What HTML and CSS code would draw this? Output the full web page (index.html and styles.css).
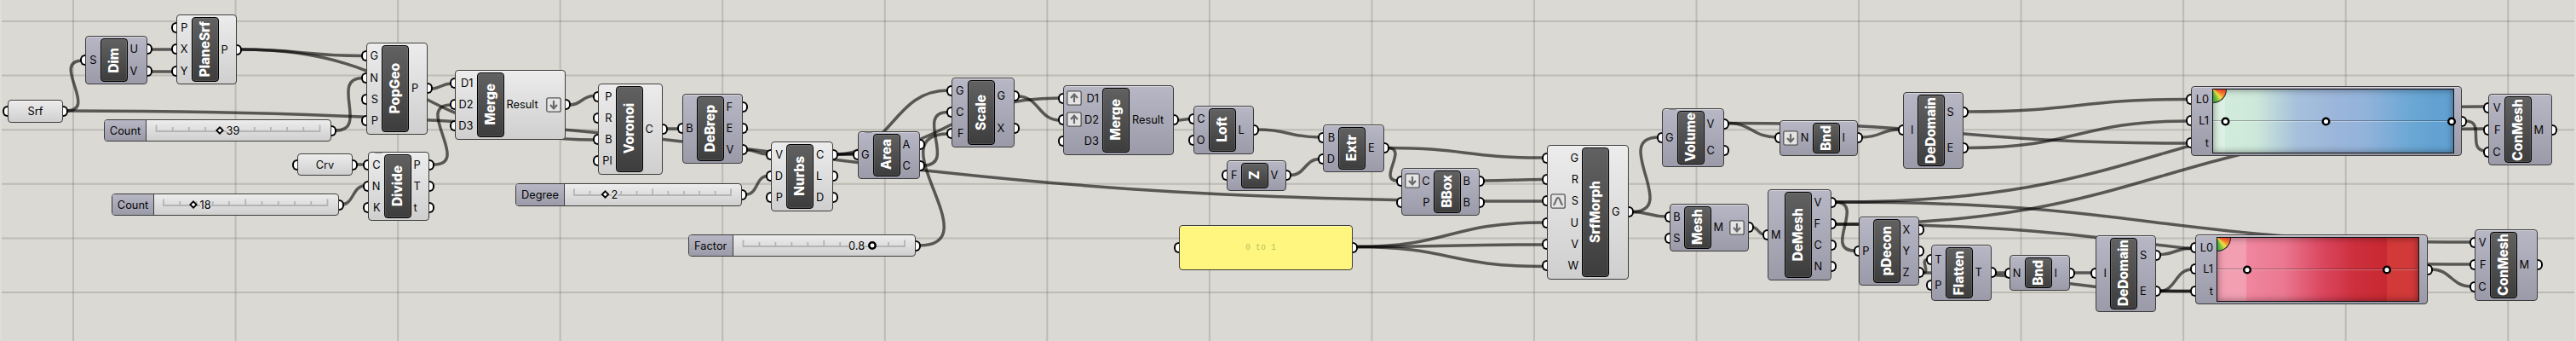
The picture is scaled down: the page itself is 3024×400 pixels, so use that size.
FILE: index.html
```html
<!DOCTYPE html>
<html lang="en">
<head>
<meta charset="utf-8">
<title>Surface morph definition</title>
<link rel="stylesheet" href="styles.css">
</head>
<body>
<main class="canvas">
<svg class="wires" id="wires" width="3024" height="400" viewBox="0 0 3024 400"></svg>
<div id="nodes"></div>
</main>
<script src="graph.js"></script>
</body>
</html>
```

FILE: styles.css
```css
* { box-sizing: border-box; }
body { margin: 0; background: #dfded9; font-family: Inter, "Liberation Sans", sans-serif; }
.canvas { position: relative; width: 3024px; height: 400px; overflow: hidden; }
.wires { position: absolute; left: 0; top: 0; }
.wires .paper { fill: #dbd9d3; }
.wires .grid { stroke: rgba(90, 90, 85, 0.24); stroke-width: 2; }
.wires .wire { fill: none; stroke: rgba(0, 0, 0, 0.6); stroke-width: 3.5; }

.node {
  position: absolute; display: flex; color: #050505; font-size: 12.8px; line-height: 16px;
  border: 1.5px solid #3c3c3c; border-radius: 4px;
  background: linear-gradient(#ececec, #cfcfcf);
  box-shadow: inset 0 1px 0 rgba(255, 255, 255, 0.45);
}
.node.dark { background: linear-gradient(#b8b7c5, #9b9aa8); }
.ports { display: flex; flex-direction: column; padding: 2px 0; }
.ports.out { flex: 1; }
.row { flex: 1; display: flex; align-items: center; position: relative; }
.in .row { justify-content: flex-end; padding-right: 4px; }
.out .row { padding-left: 3px; }
.in .icon { margin-right: auto; margin-left: 3px; }
.out .icon { margin-left: auto; margin-right: 4px; }
.label { position: relative; top: 0.5px; }
.icon { width: 18px; height: 18px; flex: none; display: block; }

.grip { position: absolute; top: 50%; width: 6px; height: 13px; margin-top: -6.5px; border: 2.4px solid #000; background: #fff; }
.grip.left { left: -7px; border-right: 0; border-radius: 6.5px 0 0 6.5px; }
.grip.right { right: -7px; border-left: 0; border-radius: 0 6.5px 6.5px 0; }

.tag {
  width: 32px; margin: 2px 0; border: 1.3px solid #000; border-radius: 4px; flex: none;
  background: linear-gradient(#616161, #3d3d3d); box-shadow: inset 0 0 0 1px rgba(255, 255, 255, 0.1);
  display: flex; align-items: center; justify-content: center; overflow: hidden;
}
.tag span { writing-mode: vertical-rl; transform: rotate(180deg); color: #fff; font-weight: 800; font-size: 15.3px; line-height: 20px; white-space: nowrap; }
.notch { position: absolute; top: -1px; width: 9px; height: 2px; background: #666; border-radius: 1px; opacity: 0.7; }

.param { justify-content: center; align-items: center; }
.caption { display: flex; align-items: center; justify-content: center; background: linear-gradient(#b8b7c5, #9b9aa8); border-right: 1.5px solid #3c3c3c; border-radius: 3px 0 0 3px; }
.track { flex: 1; position: relative; }
.track svg { display: block; width: 100%; height: 100%; overflow: visible; }
.value { position: absolute; top: 4.5px; background: linear-gradient(#e6e6e6, #d6d6d6); }
.panel { background: #fff67f; align-items: center; }
.panel .text { width: 100%; padding: 1px 0 0 77px; font: 10px/14px "Liberation Mono", monospace; color: #b9bf62; }

.swatch { border: 1.5px solid #111; margin: 2px 0; position: relative; flex: none; box-shadow: inset 0 0 9px rgba(0, 0, 0, 0.45); }
.swatch.cool { background: linear-gradient(90deg, #dcf0e3 0, #dcf0e3 5%, #d2ecdb 5%, #cde7da 18%, #a6c0dc 35%, #9cb6da 50%, #93b3db 63%, #6fa9d5 80%, #62a1d2 92%); }
.swatch.warm { background: linear-gradient(90deg, #f29fb2 0, #f29fb2 14.5%, #f0869f 14.5%, #ea7890 33%, #db4760 52%, #cd303d 68%, #c82831 84.5%, #d23939 84.5%); }
.swatch svg { display: block; width: 100%; height: 100%; overflow: visible; }
.wheel { position: absolute; left: 0; top: 0; width: 16px; height: 16px; border-radius: 0 0 16px 0; border: solid #222; border-width: 0 1.5px 1.5px 0;
  background: conic-gradient(from 90deg at 0 0, #e43d2d 0deg, #f08a2c 28deg, #f1e04b 48deg, #8fc63f 65deg, #2f9e41 90deg); }
```

FILE: graph.js
```js
// Node: [title, x, y, w, h, tagX, inputs, outputs, light?, notch?]
// A port prefixed with v, ^ or ~ carries a flatten, graft or reparameterize icon.
const components = [
  ["Dim",100,42,73,57,118,["S"],["U","V"]],
  ["PlaneSrf",207,17,71,82,225,["P","X","Y"],["P"],1],
  ["PopGeo",429.5,50,72,107.5,448.5,["G","N","S","P"],["P"],1],
  ["Merge",534,82,130,81.5,560,["D1","D2","D3"],["v:Result"],1],
  ["Divide",432,177.5,72,81.5,451,["C","N","K"],["P","T","t"],1,1],
  ["Voronoi",701.5,97.5,76,107,723,["P","R","B","Pl"],["C"],1],
  ["DeBrep",800.5,110,71,81.5,818,["B"],["F","E","V"]],
  ["Nurbs",905,166,73,81.5,923.5,["V","D","P"],["C","L","D"],1],
  ["Area",1006.5,153.5,73,56,1025,["G"],["A","C"],0,1],
  ["Scale",1117,91,73.5,81.5,1136,["G","C","F"],["G","X"]],
  ["Merge",1248,99.5,130,82,1294.5,["^:D1","^:D2","D3"],["Result"]],
  ["Loft",1400.5,124,71.5,56.5,1419,["C","O"],["L"]],
  ["Z",1439.5,187.5,70.5,36,1457,["F"],["V"]],
  ["Extr",1553,145.5,71.5,56,1571.5,["B","D"],["E"]],
  ["BBox",1644.5,196.5,92,56,1683,["v:C","P"],["B","B"]],
  ["SrfMorph",1816,169.5,96,158,1857.5,["G","R","~:S","U","V","W"],["G"],1],
  ["Volume",1950.5,126.5,73,69,1969,["G"],["V","C"],0,1],
  ["Bnd",2089,140.5,92,42,2128,["v:N"],["I"]],
  ["DeDomain",2234,107.5,70.5,90.5,2251,["I"],["S","E"]],
  ["Mesh",1959.5,238.5,93,56,1977,["B","S"],["v:M"]],
  ["DeMesh",2075,221.5,74.5,107,2095,["M"],["V","F","C","N"]],
  ["pDecon",2181.5,253.5,71,81.5,2199,["P"],["X","Y","Z"]],
  ["Flatten",2267,286.5,70.5,66.5,2284,["T","P"],["T"]],
  ["Bnd",2358.5,299,71.5,42,2377,["N"],["I"]],
  ["DeDomain",2460,275.5,70.5,90,2477.5,["I"],["S","E"]],
  ["ConMesh",2921,110,74.5,84,2940,["V","F","C"],["M"]],
  ["ConMesh",2904.5,268.5,74,84.5,2923,["V","F","C"],["M"]]
];
// Slider: [caption, x, y, w, h, captionWidth, firstTick, lastTick, knobX, value, valueX, round?]
const sliders = [
  ["Count",122,140,267,26,49,183.5,375.5,258,"39",265.5],
  ["Count",131,227,266.5,26,49,192,384.5,227,"18",234.5],
  ["Degree",605,215,266,26.5,57,674,858,710.5,"2",717.5],
  ["Factor",808,275,267,26,51.5,872,1061.5,1023.5,"0.8",996,1]
];
const params = [["Srf",9,117,65,27],["Crv",349,180,65,26]];
// Gradient: [class, x, y, w, h, swatchX, swatchW, handleXs]
const gradients = [
  ["cool",2571.5,101,318.5,82,2597,283.5,[2612.5,2730.5,2878]],
  ["warm",2577,275,272.5,82,2602,237.5,[2638,2802]]
];
// Wire: [x1, y1, x2, y2]
const wires = [
  [78,130,97,71],[78,130,1811,236],[178,58,203,58],[178,84,203,84],
  [283,58,426,65.5],[283,58,697,164],[394,153,426,91.5],[418,193,428,193],[401,240,428,218],
  [506,104,530,98],[509,193,530,123],[669,123,697,112.5],[782,151,796,151],
  [876,176,901,181],[876,228,901,206.5],[982,181,1002,181],[982,181,1113,106],[982,181,1244,115],
  [1084,194,1113,131.5],[1079,288,1113,157],[1195,113,1244,141],[1383,141,1397,139.5],
  [1477,152,1549,161],[1515,205.5,1549,186.5],[1629,173.5,1811,185],[1629,173.5,1641,212],
  [1741,212,1811,210.5],[1592,289.5,1811,261],[1592,289.5,1811,287],[1592,289.5,1811,312.5],
  [1916,248.5,1947,161],[1916,248.5,1956,254],[2028,144.5,2086,161],[2028,144.5,2568,168],
  [2186,161,2230,152],[2309,131,2568,116.5],[2309,173.5,2568,142],[2057,266.5,2071,275],
  [2154,237,2177,294],[2154,237,2918,125],[2154,237,2901,284],[2154,263,2918,151],[2154,263,2901,310],
  [2257,320,2263,304.5],[2257,320,2573,341.5],[2342,320,2355,320],[2434,320,2456,320],
  [2535,298.5,2573,291],[2535,341.5,2573,316],[2535,341.5,2573,341.5],[2895,142,2918,177],[2854,316,2901,336]
];

const glyphs = {
  v: '<path d="M9 4v9M5 9l4 4.3L13 9" />',
  "^": '<path d="M9 14V5M5 9l4-4.3L13 9" />',
  "~": '<path d="M3.5 13.5C6.5 12.5 6 5 9 5s2.5 7.500 5.500 8.500" />'
};
const icon = k => `<svg class="icon" viewBox="0 0 18 18"><rect x=".8" y=".8" width="16.400" height="16.400" rx="2" fill="#e4e4e4" stroke="#555" stroke-width="1.300"/><g fill="none" stroke="#6a6a6a" stroke-width="2.200">${glyphs[k]}</g></svg>`;
const box = (x, y, w, h) => `style="left:${x}px;top:${y}px;width:${w}px;height:${h}px"`;
const grip = side => `<i class="grip ${side}"></i>`;

function port(p, side) {
  const [a, b] = p.split(":");
  const label = `<span class="label">${b || a}</span>`;
  const mark = b ? icon(a) : "";
  return side === "in"
    ? `<div class="row">${grip("left")}${mark}${label}</div>`
    : `<div class="row">${label}${mark}${grip("right")}</div>`;
}
function component([title, x, y, w, h, tagX, ins, outs, light, notch]) {
  return `<div class="node ${light ? "" : "dark"}" ${box(x, y, w, h)}>` +
    (notch ? '<i class="notch" style="left:7px"></i>' : "") +
    `<div class="ports in" style="width:${tagX - x - 1.5}px">${ins.map(p => port(p, "in")).join("")}</div>` +
    `<div class="tag"><span>${title}</span></div>` +
    `<div class="ports out">${outs.map(p => port(p, "out")).join("")}</div></div>`;
}
function slider([cap, x, y, w, h, cw, t0, t1, kx, value, vx, round]) {
  const ox = x + 1 + cw, base = 13;
  let ticks = `M${t0 - ox} ${base}H${t1 - ox}`;
  for (let i = 0; i <= 10; i++) ticks += `M${t0 - ox + (t1 - t0) * i / 10} ${base + 1}v${i % 5 ? -6 : -8.5}`;
  const k = kx - ox;
  const knob = round
    ? `<circle cx="${k}" cy="12" r="3.700" fill="#fff" stroke="#000" stroke-width="2.500"/>`
    : `<path d="M${k} 8.300l3.700 3.700-3.700 3.700-3.700-3.700z" fill="#fff" stroke="#000" stroke-width="1.800"/>`;
  return `<div class="node" ${box(x, y, w, h)}><div class="caption" style="width:${cw}px"><span class="label">${cap}</span></div>` +
    `<div class="track"><svg><path d="${ticks}" fill="none" stroke="#b4b4b4" stroke-width="1.800"/>${knob}</svg>` +
    `<span class="value" style="left:${vx - ox}px">${value}</span></div>${grip("right")}</div>`;
}
function gradient([cls, x, y, w, h, sx, sw, handles]) {
  const dots = handles.map(c => `<circle cx="${c - sx - 1}" cy="37.500" r="3.800" fill="#fff" stroke="#000" stroke-width="2.500"/>`).join("");
  return `<div class="node dark" ${box(x, y, w, h)}><div class="ports in" style="width:${sx - x - 1}px">${["L0", "L1", "t"].map(p => port(p, "in")).join("")}</div>` +
    `<div class="swatch ${cls}" style="width:${sw}px"><i class="wheel"></i><svg><path d="M0 36.500H${sw - 3}" stroke="#000" stroke-opacity=".3"/><path d="M0 37.500H${sw - 3}" stroke="#fff" stroke-opacity=".3"/>${dots}</svg></div>${grip("right")}</div>`;
}

let svg = '<rect class="paper" x="2" y="0" width="3020" height="400"/>';
for (let i = 0; i < 16; i++) svg += `<path class="grid" d="M${86 + 190.55 * i} 0V400"/>`;
for (let i = 0; i < 6; i++) svg += `<path class="grid" d="M2 ${25 + 63.6 * i}H3022"/>`;
for (const [x1, y1, x2, y2] of wires) {
  const d = Math.max((x2 - x1) * 0.5, Math.abs(y2 - y1) * 0.65);
  svg += `<path class="wire" d="M${x1} ${y1}C${x1 + d} ${y1} ${x2 - d} ${y2} ${x2} ${y2}"/>`;
}
document.getElementById("wires").innerHTML = svg;
document.getElementById("nodes").innerHTML =
  params.map(([t, x, y, w, h]) => `<div class="node param" ${box(x, y, w, h)}>${grip("left")}<span class="label">${t}</span>${grip("right")}</div>`).join("") +
  sliders.map(slider).join("") + components.map(component).join("") + gradients.map(gradient).join("") +
  `<div class="node panel" ${box(1384, 263.5, 204, 53)}>${grip("left")}<span class="text">0 to 1</span>${grip("right")}</div>`;
```
